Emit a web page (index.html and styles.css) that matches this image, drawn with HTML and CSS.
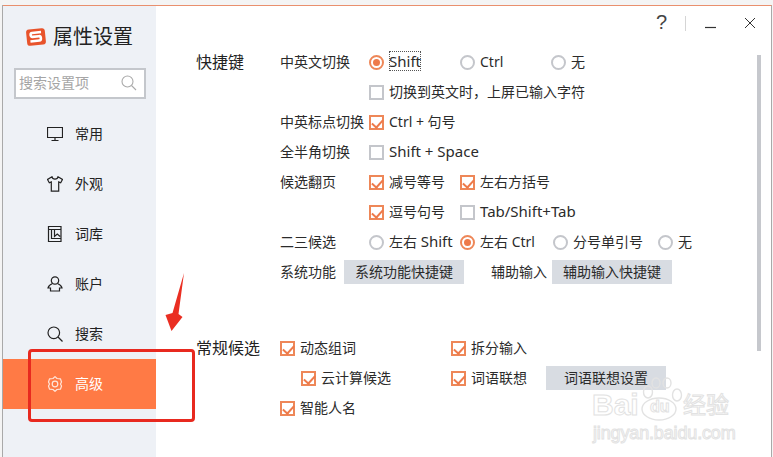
FILE: index.html
```html
<!DOCTYPE html>
<html lang="zh-CN">
<head>
<meta charset="utf-8">
<title>属性设置</title>
<link rel="stylesheet" href="styles.css">
</head>
<body>
<div class="window">
  <aside class="sidebar">
    <div class="brand">
      <svg class="logo" viewBox="0 0 22 20" width="22" height="20">
        <g transform="rotate(-6 11 10)">
          <rect x="1.600" y="1.800" width="18.800" height="16.400" rx="3" fill="#e8532b"/>
          <path d="M16.500 5.600H7.500c-2.200 0-2.200 3.900 0 3.900h6.500c2.300 0 2.300 4.400 0 4.400H5" fill="none" stroke="#fff" stroke-width="2.600"/>
        </g>
      </svg>
      <span class="brand-name">属性设置</span>
    </div>
    <div class="search">
      <span class="search-text">搜索设置项</span>
      <svg class="search-icon" viewBox="0 0 16 16" width="16" height="16"><circle cx="6.500" cy="6.500" r="5.500" fill="none" stroke="#aaa" stroke-width="1.100"/><path d="M10.500 10.500 15 15" stroke="#aaa" stroke-width="1.100"/></svg>
    </div>
    <nav class="nav">
      <div class="nav-item">
        <svg class="nav-icon" viewBox="0 0 16 16"><path d="M.5 1.500h15v10H.5zM8 11.500v3M4.500 14.500h7"/></svg>
        <span>常用</span>
      </div>
      <div class="nav-item">
        <svg class="nav-icon" viewBox="0 0 16 16"><path d="M5 .8 .5 3.500l1.800 3.300 2-.9v9.300h7.400V5.900l2 .9 1.800-3.300L11 .8c-.5 3-5.500 3-6 0z"/></svg>
        <span>外观</span>
      </div>
      <div class="nav-item">
        <svg class="nav-icon" viewBox="0 0 16 16"><path d="M1.500.5h12.500v15H1.500zM1.500 3.500h12.500M4.500 3.500v9h9M7.500 3.500v7l2.800-2.500 2.800 2.500"/></svg>
        <span>词库</span>
      </div>
      <div class="nav-item">
        <svg class="nav-icon" viewBox="0 0 16 16"><circle cx="8" cy="4.500" r="3.700"/><path d="M5.500 7.500C3 8.500 1.500 10 1 12h2.500v3h9v-3H15c-.5-2-2-3.500-4.500-4.500"/></svg>
        <span>账户</span>
      </div>
      <div class="nav-item">
        <svg class="nav-icon" viewBox="0 0 16 16"><circle cx="6.800" cy="6.800" r="5.800"/><path d="M11 11l4.500 4.500"/></svg>
        <span>搜索</span>
      </div>
      <div class="nav-item active">
        <svg class="nav-icon" viewBox="0 0 16 16"><path d="M8 .6l2 1.900 3.500.4 1 3.100-1 2 1 2-1 3.100-3.500.4-2 1.900-2-1.900-3.500-.4-1-3.100 1-2-1-2 1-3.100 3.500-.4z"/><circle cx="8" cy="8" r="2.800"/></svg>
        <span>高级</span>
      </div>
    </nav>
  </aside>

  <main class="main">
    <section class="section">
      <h2 class="section-title">快捷键</h2>
      <div class="rows">
        <div class="row">
          <span class="label">中英文切换</span>
          <label class="opt w91"><i class="radio on"></i><span class="focus lat">Shift</span></label>
          <label class="opt w91"><i class="radio"></i>Ctrl</label>
          <label class="opt"><i class="radio"></i>无</label>
        </div>
        <div class="row">
          <span class="label"></span>
          <label class="opt"><i class="check"></i>切换到英文时，上屏已输入字符</label>
        </div>
        <div class="row">
          <span class="label">中英标点切换</span>
          <label class="opt"><i class="check on"></i>Ctrl + 句号</label>
        </div>
        <div class="row">
          <span class="label">全半角切换</span>
          <label class="opt"><i class="check"></i><span class="lat">Shift + Space</span></label>
        </div>
        <div class="row">
          <span class="label">候选翻页</span>
          <label class="opt w91"><i class="check on"></i>减号等号</label>
          <label class="opt"><i class="check on"></i>左右方括号</label>
        </div>
        <div class="row">
          <span class="label"></span>
          <label class="opt w91"><i class="check on"></i>逗号句号</label>
          <label class="opt"><i class="check"></i><span class="lat">Tab/Shift+Tab</span></label>
        </div>
        <div class="row">
          <span class="label">二三候选</span>
          <label class="opt w91"><i class="radio"></i><span>左右 <span class="lat">Shift</span></span></label>
          <label class="opt w93"><i class="radio on"></i>左右 Ctrl</label>
          <label class="opt w105"><i class="radio"></i>分号单引号</label>
          <label class="opt"><i class="radio"></i>无</label>
        </div>
        <div class="row">
          <span class="label short">系统功能</span>
          <button class="btn">系统功能快捷键</button>
          <span class="label-mid">辅助输入</span>
          <button class="btn">辅助输入快捷键</button>
        </div>
      </div>
    </section>

    <section class="section second">
      <h2 class="section-title narrow">常规候选</h2>
      <div class="rows">
        <div class="row">
          <label class="opt w171"><i class="check on"></i>动态组词</label>
          <label class="opt"><i class="check on"></i>拆分输入</label>
        </div>
        <div class="row">
          <label class="opt w171 indent"><i class="check on"></i>云计算候选</label>
          <label class="opt w95"><i class="check on"></i>词语联想</label>
          <button class="btn">词语联想设置</button>
        </div>
        <div class="row">
          <label class="opt"><i class="check on"></i>智能人名</label>
        </div>
      </div>
    </section>
  </main>

  <div class="controls">
    <span class="help">?</span>
    <span class="sep"></span>
    <svg class="min" viewBox="0 0 12 12" width="12" height="12"><path d="M0 10.500h11" stroke="#333" stroke-width="1.200"/></svg>
    <svg class="close" viewBox="0 0 12 12" width="12" height="12"><path d="M1 1l10 10M11 1 1 11" stroke="#333" stroke-width="1"/></svg>
  </div>
  <div class="scrollbar"></div>
</div>

<div class="watermark">
  <svg class="paw" viewBox="0 0 44 50" width="44" height="50">
    <g fill="none" stroke="#e2e2e2" stroke-width="1.400">
      <ellipse cx="8" cy="16" rx="4.500" ry="6"/><ellipse cx="16" cy="7" rx="4" ry="5"/><ellipse cx="27" cy="7" rx="4" ry="5"/><ellipse cx="37" cy="19" rx="4.500" ry="6"/>
      <ellipse cx="19" cy="33" rx="17" ry="11"/>
    </g>
  </svg>
  <span class="wm-bai">Bai</span>
  <span class="wm-du">du</span>
  <span class="wm-jy">经验</span>
  <span class="wm-url">jingyan.baidu.com</span>
</div>

<div class="mark-box"></div>
<svg class="mark-arrow" viewBox="0 0 24 62" width="24" height="62">
  <path d="M20 1 8.500 41 1.500 43 7.500 59 18.500 45 14.500 42z" fill="#ea2e22"/>
</svg>
</body>
</html>
```

FILE: styles.css
```css
* { box-sizing: border-box; }
html, body { margin: 0; padding: 0; }
body {
  width: 773px;
  height: 457px;
  overflow: hidden;
  position: relative;
  background: #f4f4f4;
  font-family: "Noto Sans", "Noto Sans CJK SC", sans-serif;
  font-size: 14px;
  color: #2b2b2b;
}
.window {
  position: relative;
  display: flex;
  width: 769px;
  height: 452px;
  margin: 5px 0 0 3px;
  background: #fff;
  border-top: 1px solid #e98f6d;
  border-right: 1px solid #a9a9a9;
  box-shadow: -1px 0 0 #a9a9a9;
}
.sidebar {
  flex: 0 0 153px;
  background: #eef1f6;
}
.brand {
  display: flex;
  align-items: center;
  height: 28px;
  margin: 17px 0 0 22px;
  gap: 6px;
}
.brand-name { font-size: 20px; color: #222; line-height: 28px; }
.search {
  display: flex;
  align-items: center;
  justify-content: space-between;
  width: 132px;
  height: 31px;
  margin: 17px 0 0 11px;
  padding: 0 7px 0 3px;
  background: #fff;
  border: 2px solid #c4c7cc;
  color: #a5a5a5;
}
.search-text { margin-bottom: 4px; }
.search-icon { margin-bottom: 2px; }
.nav { margin-top: 10px; }
.nav-item {
  display: flex;
  align-items: center;
  height: 50px;
  padding-left: 44px;
  gap: 12px;
  color: #222;
}
.nav-item span { margin-bottom: 2px; }
.nav-item.active { background: #ff7a45; color: #fff; }
.nav-icon {
  width: 16px;
  height: 16px;
  fill: none;
  stroke: #222;
  stroke-width: 1.200;
}
.active .nav-icon { stroke: #ffe6da; stroke-linejoin: round; }
.main {
  flex: 1;
  padding: 41px 0 0 40px;
}
.section { display: flex; }
.second { margin-top: 46px; }
.section-title {
  flex: 0 0 84px;
  margin: 0;
  font-size: 16px;
  font-weight: 400;
  line-height: 30px;
  color: #222;
}
.section-title.narrow { flex-basis: 84px; }
.rows { display: flex; flex-direction: column; }
.row {
  display: flex;
  align-items: center;
  height: 30px;
}
.label { flex: 0 0 89px; white-space: nowrap; margin-bottom: 2px; }
.label.short { flex-basis: 64px; }
.label-mid { margin-left: 27px; width: 61px; white-space: nowrap; margin-bottom: 2px; }
.opt {
  display: flex;
  align-items: center;
  gap: 5px;
  white-space: nowrap;
  margin-bottom: 2px;
}
.lat { font-size: 15px; }
.w91 { flex: 0 0 91px; }
.w93 { flex: 0 0 93px; }
.w105 { flex: 0 0 105px; }
.w171 { flex: 0 0 171px; }
.w95 { flex: 0 0 95px; }
.indent { padding-left: 21px; }
.check, .radio {
  position: relative;
  flex: 0 0 15px;
  width: 15px;
  height: 15px;
  margin-top: 2px;
  border: 2px solid #c4c6cb;
  background: #fff;
}
.radio { border-radius: 50%; }
.check.on, .radio.on { border-color: #ee8758; }
.radio.on::after {
  content: "";
  position: absolute;
  left: 2px;
  top: 2px;
  width: 7px;
  height: 7px;
  border-radius: 50%;
  background: #ee7a4a;
}
.check.on::after {
  content: "";
  position: absolute;
  left: 3px;
  top: 0;
  width: 5px;
  height: 9px;
  border: solid #ee7a4a;
  border-width: 0 2px 2px 0;
  transform: rotate(42deg);
}
.focus { outline: 1px dotted #555; outline-offset: -1px; line-height: 20px; }
.btn {
  width: 120px;
  height: 24px;
  padding: 0;
  border: 0;
  background: #d8dce2;
  color: #2b2b2b;
  font: inherit;
  line-height: 24px;
}
.controls {
  position: absolute;
  top: 9px;
  right: 15px;
  display: flex;
  align-items: center;
  height: 16px;
}
.help { font: 400 20px/16px "Liberation Sans", sans-serif; color: #444; width: 9px; margin-top: -2px; }
.sep { width: 1px; height: 15px; background: #d5d5d5; margin: 0 19px 0 20px; }
.min { margin-right: 27px; }
.scrollbar {
  position: absolute;
  top: 49px;
  right: 10px;
  width: 4px;
  height: 296px;
  background: #c6c8cd;
}
.mark-box {
  position: absolute;
  left: 28px;
  top: 349px;
  width: 167px;
  height: 73px;
  border: 3px solid #e8291f;
  border-radius: 4px;
}
.mark-arrow {
  position: absolute;
  left: 164px;
  top: 272px;
}
.watermark {
  position: absolute;
  left: 590px;
  top: 375px;
  width: 150px;
  height: 70px;
  color: #fff;
  -webkit-text-stroke: 1px #e2e2e2;
}
.paw { position: absolute; left: 50px; top: 1px; }
.wm-bai, .wm-du, .wm-jy, .wm-url { position: absolute; line-height: 1; }
.wm-bai { left: 2px; top: 15px; font: 700 30px/1 "Liberation Sans", sans-serif; }
.wm-du { left: 60px; top: 24px; font: 700 16px/1 "Liberation Sans", sans-serif; }
.wm-jy { left: 93px; top: 17px; font-size: 23px; font-family: "Noto Sans CJK SC", sans-serif; }
.wm-url { left: 3px; top: 49px; font: 400 18px/1 "Liberation Sans", sans-serif; letter-spacing: -.15px; }
```
